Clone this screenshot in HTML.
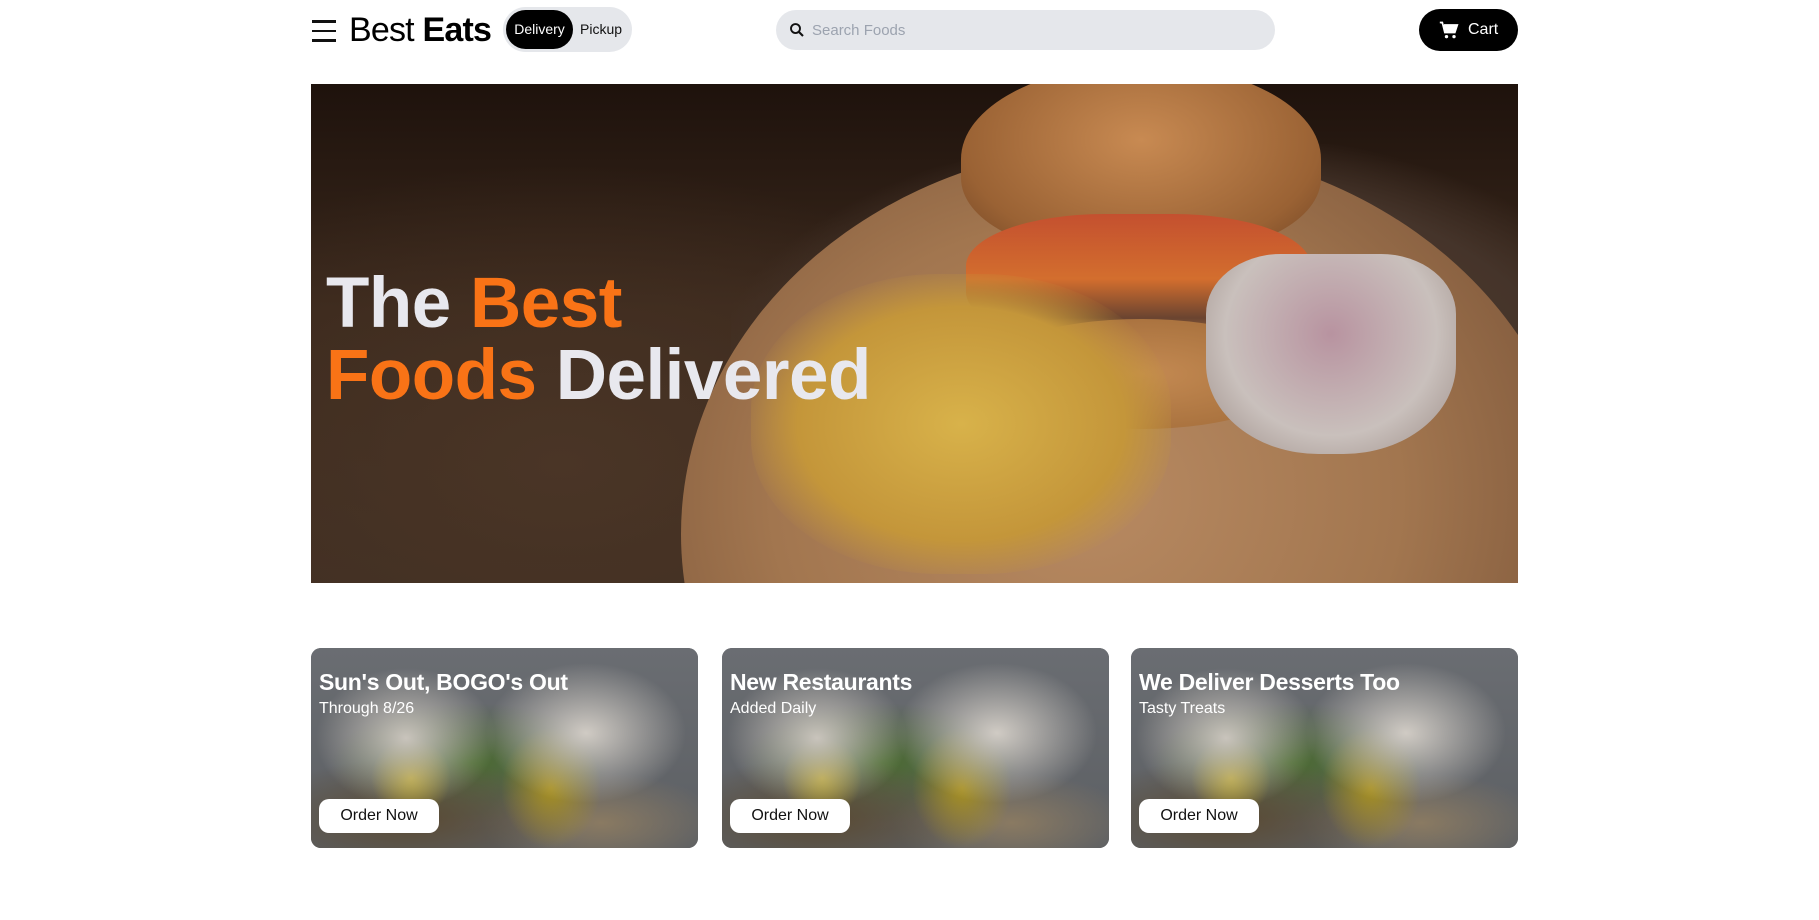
<!DOCTYPE html>
<html><head><meta charset="utf-8"><style>
*{margin:0;padding:0;box-sizing:border-box}
body{width:1819px;height:920px;background:#fff;font-family:"Liberation Sans",sans-serif;position:relative;overflow:hidden}
.abs{position:absolute}
.ham span{display:block;width:24px;height:2.5px;background:#111;margin-bottom:7px}
.logo{left:349px;top:11px;font-size:34px;color:#000;letter-spacing:-0.8px}
.toggle{left:503px;top:7px;width:129px;height:45px;border-radius:23px;background:#e5e7eb}
.deliv{left:506px;top:10px;width:67px;height:39px;border-radius:20px;background:#000;color:#fff;font-size:14px;line-height:39px;text-align:center}
.pick{left:580px;top:10px;font-size:14px;line-height:39px;color:#111}
.search{left:776px;top:10px;width:499px;height:40px;border-radius:20px;background:#e5e7eb}
.search span{position:absolute;left:36px;top:12px;font-size:15px;color:#9ca3af}
.cart{left:1419px;top:9px;width:99px;height:42px;border-radius:21px;background:#000;color:#fff;font-size:16px}
.hero{left:311px;top:84px;width:1207px;height:499px;overflow:hidden;background:#2a1a12}
.hero div{position:absolute}
.ht{left:15px;font-size:71px;font-weight:bold;color:#e8e8ee;line-height:72px;letter-spacing:-0.5px}
.or{color:#f97316}
.card{top:648px;width:387px;height:200px;border-radius:10px;overflow:hidden;background:#5f6266}
.card .t{position:absolute;left:8px;top:21px;color:#fff;font-weight:bold;font-size:23px;letter-spacing:-0.3px}
.card .s{position:absolute;left:8px;top:52px;color:#fff;font-size:16px}
.card .b{position:absolute;left:8px;top:151px;width:120px;height:34px;background:#fff;border-radius:10px;font-size:16px;line-height:34px;text-align:center;color:#111}
.card .im{position:absolute;inset:0}
</style></head><body>
<div class="abs ham" style="left:312px;top:20px"><span></span><span></span><span></span></div>
<div class="abs logo">Best <b>Eats</b></div>
<div class="abs toggle"></div>
<div class="abs deliv">Delivery</div>
<div class="abs pick">Pickup</div>
<div class="abs search"><svg class="abs" style="left:12px;top:11px" width="18" height="18" viewBox="0 0 24 24"><circle cx="10" cy="10" r="6" fill="none" stroke="#111" stroke-width="2.5"/><path d="M14.5 14.5L20 20" stroke="#111" stroke-width="2.8"/></svg><span>Search Foods</span></div>
<div class="abs cart"><svg class="abs" style="left:20px;top:11px" width="20" height="20" viewBox="0 0 24 24"><path d="M1 3h3l3 12h12l3-9H6" fill="#fff" stroke="#fff" stroke-width="2"/><circle cx="9" cy="20" r="2" fill="#fff"/><circle cx="18" cy="20" r="2" fill="#fff"/></svg><span class="abs" style="left:49px;top:12px">Cart</span></div>

<div class="abs hero">
<div style="inset:0;background:radial-gradient(ellipse 500px 300px at 250px 380px,#4a3526,transparent),linear-gradient(180deg,#1e120c 0%,#3a281c 45%,#3f2e22 100%)"></div>
<div style="left:420px;top:60px;width:900px;height:500px;background:radial-gradient(ellipse at 50% 50%,#5a4332 0%,#45342a 60%,transparent 75%)"></div>
<div style="left:370px;top:60px;width:900px;height:780px;border-radius:50%;background:radial-gradient(ellipse at 45% 45%,#b88a62 0%,#a2764f 45%,#80593c 75%,#5a3c28 100%)"></div>
<div style="left:650px;top:-20px;width:360px;height:190px;border-radius:50% 50% 40% 40%;background:radial-gradient(ellipse at 50% 40%,#c88a52,#9a6234 70%,#6d4223)"></div>
<div style="left:655px;top:130px;width:345px;height:130px;border-radius:40%;background:linear-gradient(180deg,#c4502f,#d36e2e 50%,#6a4430 80%,#b07a48)"></div>
<div style="left:670px;top:235px;width:320px;height:110px;border-radius:50%;background:radial-gradient(ellipse,#c48a52,#a06a38)"></div>
<div style="left:440px;top:190px;width:420px;height:300px;border-radius:45%;background:radial-gradient(ellipse at 50% 50%,#d8b24a,#c4963a 55%,transparent 75%)"></div>
<div style="left:895px;top:170px;width:250px;height:200px;border-radius:30% 30% 45% 45%;background:radial-gradient(ellipse at 50% 40%,#b893a0,#c9c0bc 60%,#9a8a84)"></div>
</div>
<div class="abs ht" style="top:268px;left:326px">The <span class="or">Best</span></div>
<div class="abs ht" style="top:340px;left:326px"><span class="or">Foods</span> Delivered</div>

<div class="abs card" style="left:311px"><div class="im" style="background:radial-gradient(ellipse 90px 70px at 95px 90px,#c9c4bc,transparent),radial-gradient(ellipse 100px 70px at 275px 85px,#d0cbc4,transparent),radial-gradient(ellipse 40px 40px at 100px 130px,#b8a020,transparent),radial-gradient(ellipse 50px 60px at 240px 140px,#a89020,transparent),radial-gradient(ellipse 160px 60px at 100px 170px,#5a4a32,transparent),radial-gradient(ellipse 120px 50px at 290px 175px,#8a7a62,transparent),radial-gradient(ellipse 140px 60px at 160px 115px,#4a6a30,transparent),linear-gradient(#6a6d72,#5c5f63)"></div><div class="t">Sun's Out, BOGO's Out</div><div class="s">Through 8/26</div><div class="b">Order Now</div></div>
<div class="abs card" style="left:722px"><div class="im" style="background:radial-gradient(ellipse 90px 70px at 95px 90px,#c9c4bc,transparent),radial-gradient(ellipse 100px 70px at 275px 85px,#d0cbc4,transparent),radial-gradient(ellipse 40px 40px at 100px 130px,#b8a020,transparent),radial-gradient(ellipse 50px 60px at 240px 140px,#a89020,transparent),radial-gradient(ellipse 160px 60px at 100px 170px,#5a4a32,transparent),radial-gradient(ellipse 120px 50px at 290px 175px,#8a7a62,transparent),radial-gradient(ellipse 140px 60px at 160px 115px,#4a6a30,transparent),linear-gradient(#6a6d72,#5c5f63)"></div><div class="t">New Restaurants</div><div class="s">Added Daily</div><div class="b">Order Now</div></div>
<div class="abs card" style="left:1131px"><div class="im" style="background:radial-gradient(ellipse 90px 70px at 95px 90px,#c9c4bc,transparent),radial-gradient(ellipse 100px 70px at 275px 85px,#d0cbc4,transparent),radial-gradient(ellipse 40px 40px at 100px 130px,#b8a020,transparent),radial-gradient(ellipse 50px 60px at 240px 140px,#a89020,transparent),radial-gradient(ellipse 160px 60px at 100px 170px,#5a4a32,transparent),radial-gradient(ellipse 120px 50px at 290px 175px,#8a7a62,transparent),radial-gradient(ellipse 140px 60px at 160px 115px,#4a6a30,transparent),linear-gradient(#6a6d72,#5c5f63)"></div><div class="t">We Deliver Desserts Too</div><div class="s">Tasty Treats</div><div class="b">Order Now</div></div>
</body></html>
